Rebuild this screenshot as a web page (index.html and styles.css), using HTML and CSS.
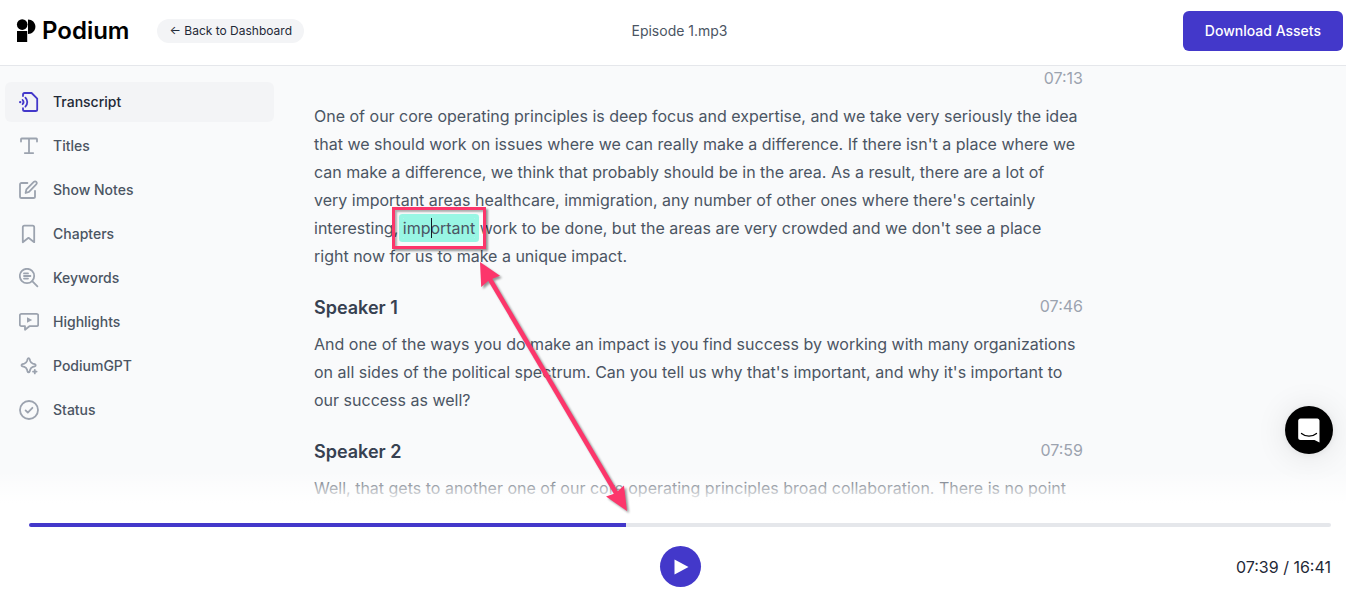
FILE: index.html
```html
<!DOCTYPE html>
<html lang="en">
<head>
  <meta charset="UTF-8" />
  <meta name="viewport" content="width=device-width, initial-scale=1.0" />
  <title>Podium - Episode 1.mp3</title>
  <link rel="stylesheet" href="styles.css">
</head>
<body>
<div class="page">
  <header class="header">
    <div class="header-left">
      <a class="logo" href="#">
        <svg width="20" height="24" viewBox="0 0 20 24" fill="#000">
          <circle cx="6.200" cy="5.600" r="5.300" />
          <path d="M12 0.600c4.200 0 7.400 3.200 7.400 7.200s-3.200 7.200-7.400 7.200z" />
          <rect x="1" y="12" width="10.200" height="11" />
        </svg>
        <span>Podium</span>
      </a>
      <a class="back-link" href="#">← Back to Dashboard</a>
    </div>
    <div class="file-name">Episode 1.mp3</div>
    <div class="header-right">
      <button type="button" class="download-btn">Download Assets</button>
    </div>
  </header>

  <main class="content">
    <nav class="sidebar">
      <a class="nav-item active" href="#">
        <svg class="icon" viewBox="0 0 20 20">
          <path d="M4 4V2.800C4 1.700 4.600 1 5.600 1h7l5.600 5.600v10.800c0 1-.6 1.600-1.600 1.600h-11c-1 0-1.600-.6-1.600-1.600v-1.200" />
          <path d="M3.600 8c1.100 1.200 1.100 3 0 4.200M6.400 5.600c2.500 2.500 2.500 6.500 0 9" />
          <circle class="solid" cx="1.200" cy="10.100" r="1.200" />
        </svg>
        Transcript
      </a>
      <a class="nav-item" href="#">
        <svg class="icon" viewBox="0 0 20 20">
          <path d="M2 5.600V3.200c0-.4.3-.7.7-.7h14.600c.4 0 .7.3.7.7v2.400M10 2.500v14.600M5.800 17.100h8.400" />
        </svg>
        Titles
      </a>
      <a class="nav-item" href="#">
        <svg class="icon" viewBox="0 0 20 20">
          <path d="M8.400 3H2.600C1.600 3 1 3.600 1 4.600v11.800c0 1 .6 1.600 1.600 1.600h11.800c1 0 1.600-.6 1.600-1.600v-5.600" />
          <path d="M6.600 13l.8-3.600 7.400-7.500c.8-.8 1.800-.8 2.500-.1s.7 1.800-.1 2.600l-7.200 7.400z" />
        </svg>
        Show Notes
      </a>
      <a class="nav-item" href="#">
        <svg class="icon" viewBox="0 0 20 20">
          <path d="M3.800 18.200V3.200c0-1 .6-1.600 1.600-1.600h8.200c1 0 1.600.6 1.600 1.600v15l-5.700-4.400z" />
        </svg>
        Chapters
      </a>
      <a class="nav-item" href="#">
        <svg class="icon" viewBox="0 0 20 20">
          <circle cx="8" cy="8" r="7.200" />
          <path d="M13.200 13.200l5.200 5.200M5 5.400h4M5 8h6.400M5 10.600h4" />
        </svg>
        Keywords
      </a>
      <a class="nav-item" href="#">
        <svg class="icon" viewBox="0 0 20 20">
          <path d="M2.400 1.800h15.200c.9 0 1.600.7 1.600 1.600v9.200c0 .9-.7 1.600-1.600 1.600h-7.200L6 17.800v-3.600H2.400c-.9 0-1.600-.7-1.600-1.600V3.400c0-.9.7-1.600 1.600-1.600z" />
          <path class="solid" d="M8 5.200l5.200 2.800-5.200 2.800z" />
        </svg>
        Highlights
      </a>
      <a class="nav-item" href="#">
        <svg class="icon" viewBox="0 0 20 20">
          <path d="M9.600 2.200c.6 0 .9.4 1.100 1l.5 1.800c.5 1.500 1.200 2.200 2.700 2.700l1.800.5c.6.2 1 .5 1 1.100s-.4.900-1 1.100l-1.800.5c-1.500.5-2.200 1.200-2.700 2.700l-.5 1.800c-.2.6-.5 1-1.100 1s-.9-.4-1.100-1L8 13.600c-.5-1.500-1.200-2.200-2.700-2.700l-1.800-.5c-.6-.2-1-.5-1-1.100s.4-.9 1-1.100l1.800-.5C6.800 7.200 7.500 6.500 8 5l.5-1.800c.2-.6.5-1 1.100-1z" />
          <path d="M15.800 13.800v3.600M14 15.600h3.600" />
        </svg>
        PodiumGPT
      </a>
      <a class="nav-item" href="#">
        <svg class="icon" viewBox="0 0 20 20">
          <circle cx="10" cy="10" r="9" />
          <path d="M6.600 10.400l2.200 2.200 4.600-4.800" />
        </svg>
        Status
      </a>
    </nav>

    <div class="transcript">
      <section class="segment">
        <div class="segment-head">
          <time>07:13</time>
        </div>
        <p>One of our core operating principles is deep focus and expertise, and we take very seriously the idea that we should work on issues where we can really make a difference. If there isn't a place where we can make a difference, we think that probably should be in the area. As a result, there are a lot of very important areas healthcare, immigration, any number of other ones where there's certainly interesting, <mark class="word">important<span class="caret"></span><span class="callout-box"></span></mark> work to be done, but the areas are very crowded and we don't see a place right now for us to make a unique impact.</p>
      </section>
      <section class="segment">
        <div class="segment-head">
          <h2>Speaker 1</h2>
          <time>07:46</time>
        </div>
        <p>And one of the ways you do make an impact is you find success by working with many organizations on all sides of the political spectrum. Can you tell us why that's important, and why it's important to our success as well?</p>
      </section>
      <section class="segment">
        <div class="segment-head">
          <h2>Speaker 2</h2>
          <time>07:59</time>
        </div>
        <p>Well, that gets to another one of our core operating principles broad collaboration. There is no point</p>
      </section>
    </div>
  </main>

  <footer class="player">
    <input class="progress" type="range" min="0" max="1001" value="459" aria-label="Playback position" style="--played: 45.85%" />
    <div class="controls">
      <button type="button" class="play-btn" aria-label="Play">
        <svg width="15" height="16" viewBox="0 0 15 16"><path d="M0.500 0.500v15L14.500 8z" fill="#fff" /></svg>
      </button>
      <div class="play-time">07:39 / 16:41</div>
    </div>
  </footer>

  <button type="button" class="chat-btn" aria-label="Open chat">
    <svg width="22" height="25" viewBox="0 0 22 25">
      <path d="M2.500 0.500h16.700c1.300 0 2.300 1 2.300 2.300v21.700l-5-2.500h-14c-1.300 0-2.300-1-2.300-2.300V2.800c0-1.300 1-2.300 2.300-2.300z" fill="#fff" />
      <path d="M3.500 15.500c4.400 3.600 10.600 3.600 15 0" fill="none" stroke="#000" stroke-width="1.300" stroke-linecap="round" />
    </svg>
  </button>

  <!-- arrow from the highlighted word to the playback position -->
  <svg class="callout-arrow" width="160" height="260" viewBox="0 0 160 260">
    <path d="M13 20L144 242" stroke="#fc366b" stroke-width="4.500" />
    <path d="M5 6l1.200 25 8.200-7 10.600-4.200z" fill="#fc366b" />
    <path d="M152 255L131 240.500l9.500-3.200 8.500-7.800z" fill="#fc366b" />
  </svg>
</div>
</body>
</html>
```
FILE: styles.css
```css
* { box-sizing: border-box; margin: 0; padding: 0; }
body {
  font-family: Inter, "Liberation Sans", sans-serif;
  font-size: 14px;
  color: #1f2937;
  background: #fff;
}
a {
  color: inherit;
  text-decoration: none;
}
button {
  font-family: inherit;
  border: none;
  cursor: pointer;
}
.page {
  position: relative;
  display: flex;
  flex-direction: column;
  height: 100vh;
  overflow: hidden;
}

/* header */
.header {
  display: grid;
  grid-template-columns: 1fr auto 1fr;
  align-items: center;
  padding: 11px 3px 14px 16px;
  border-bottom: 1px solid #e5e7eb;
}
.header-left {
  display: flex;
  align-items: center;
  gap: 28px;
}
.logo {
  display: flex;
  align-items: center;
  gap: 6px;
  color: #000;
  font-size: 24px;
  font-weight: 600;
  line-height: 24px;
}
.back-link {
  padding: 0 12px;
  border-radius: 12px;
  background: #f3f4f6;
  font-size: 12px;
  line-height: 24px;
}
.file-name {
  color: #4b5563;
  line-height: 20px;
}
.header-right {
  display: flex;
  justify-content: flex-end;
}
.download-btn {
  padding: 0 22px;
  border-radius: 6px;
  background: #4338ca;
  color: #fff;
  font-size: 14px;
  font-weight: 500;
  line-height: 40px;
}

/* content */
.content {
  position: relative;
  flex: 1;
  min-height: 0;
  display: flex;
  gap: 40px;
  overflow: hidden;
  background: #f9fafb;
}
.content::after {
  content: "";
  position: absolute;
  left: 0;
  right: 0;
  bottom: 0;
  height: 32px;
  background: linear-gradient(to bottom, rgba(255, 255, 255, 0), #fff);
}
.sidebar {
  display: flex;
  flex-direction: column;
  gap: 4px;
  flex: 0 0 274px;
  padding: 16px 0 0 5px;
}
.nav-item {
  display: flex;
  align-items: center;
  gap: 14px;
  height: 40px;
  padding: 0 14px;
  border-radius: 6px;
  color: #4b5563;
  font-weight: 500;
  line-height: 20px;
}
.nav-item.active {
  background: #f3f4f6;
  color: #1f2937;
}
.icon {
  width: 20px;
  height: 20px;
  fill: none;
  stroke: #9ca3af;
  stroke-width: 1.8;
  stroke-linecap: round;
  stroke-linejoin: round;
}
.icon .solid {
  fill: #9ca3af;
  stroke: none;
}
.active .icon {
  stroke: #4338ca;
}
.active .icon .solid {
  fill: #4338ca;
}

/* transcript */
.transcript {
  flex: 0 1 769px;
  color: #4b5563;
  font-size: 16px;
  line-height: 28px;
}
.segment {
  margin-bottom: 24px;
}
.segment p {
  padding-right: 4px;
}
.segment-head {
  display: flex;
  align-items: flex-end;
  height: 24px;
  margin-bottom: 12px;
}
.segment-head h2 {
  color: #374151;
  font-size: 18px;
  font-weight: 600;
  line-height: 20px;
}
.segment-head time {
  margin-left: auto;
  color: #9ca3af;
  line-height: 24px;
}
.word {
  position: relative;
  border-radius: 1px;
  background: #99f6e4;
  box-shadow: 0 0 0 4px #99f6e4;
  color: inherit;
}
.caret {
  position: absolute;
  top: 0;
  bottom: 0;
  left: 28px;
  width: 1px;
  background: #111827;
}
.callout-box {
  position: absolute;
  inset: -11px;
  border: 3px solid #fc366b;
  box-shadow: 2px 2px 2px rgba(0, 0, 0, 0.4), inset 2px 2px 2px rgba(0, 0, 0, 0.3);
}
.callout-arrow {
  position: absolute;
  top: 256px;
  left: 475px;
  pointer-events: none;
  filter: drop-shadow(2px 2px 1px rgba(0, 0, 0, 0.4));
}

/* player */
.player {
  padding: 20px 15px 12px 29px;
  background: #fff;
}
.progress {
  display: block;
  appearance: none;
  width: 100%;
  height: 4px;
  border-radius: 2px;
  background: linear-gradient(to right, #4338ca var(--played), #e5e7eb var(--played));
  cursor: pointer;
}
.progress::-webkit-slider-thumb {
  appearance: none;
  width: 4px;
  height: 4px;
  background: transparent;
}
.controls {
  display: grid;
  grid-template-columns: 1fr auto 1fr;
  align-items: center;
  margin-top: 19px;
}
.play-btn {
  grid-column: 2;
  display: flex;
  align-items: center;
  justify-content: center;
  width: 41px;
  height: 41px;
  padding-left: 3px;
  border-radius: 50%;
  background: #4338ca;
}
.play-time {
  justify-self: end;
  font-size: 16px;
  line-height: 20px;
}

/* chat launcher */
.chat-btn {
  position: absolute;
  right: 13px;
  bottom: 145px;
  display: flex;
  align-items: center;
  justify-content: center;
  width: 48px;
  height: 48px;
  border-radius: 50%;
  background: #000;
  box-shadow: 0 1px 6px rgba(0, 0, 0, 0.06), 0 2px 32px rgba(0, 0, 0, 0.1);
}
```
